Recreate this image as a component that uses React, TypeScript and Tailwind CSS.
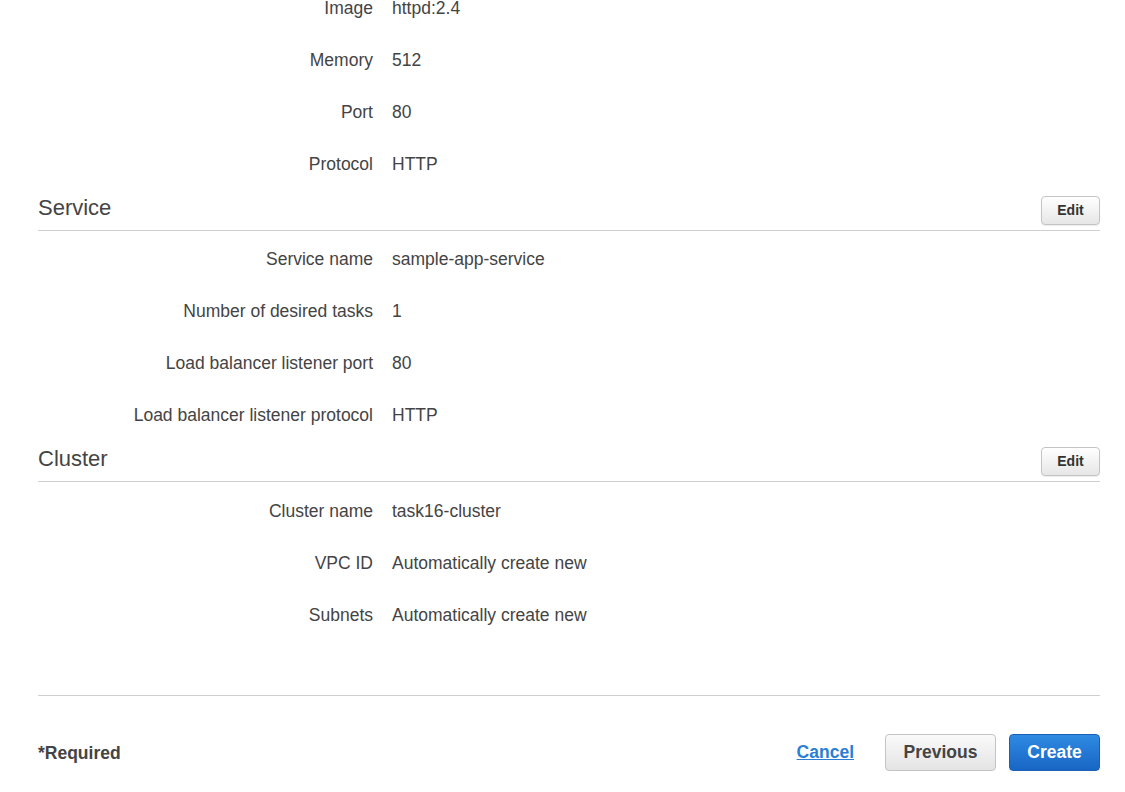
import React from "react";

type Row = [string, string];

const top: Row[] = [
  ["Image", "httpd:2.4"],
  ["Memory", "512"],
  ["Port", "80"],
  ["Protocol", "HTTP"],
];
const service: Row[] = [
  ["Service name", "sample-app-service"],
  ["Number of desired tasks", "1"],
  ["Load balancer listener port", "80"],
  ["Load balancer listener protocol", "HTTP"],
];
const cluster: Row[] = [
  ["Cluster name", "task16-cluster"],
  ["VPC ID", "Automatically create new"],
  ["Subnets", "Automatically create new"],
];

function Rows({ rows }: { rows: Row[] }) {
  return (
    <div className="flex flex-col">
      {rows.map(([k, v]) => (
        <div key={k} className="flex h-[52px] items-center">
          <div className="w-[335px] shrink-0 text-right">{k}</div>
          <div className="pl-[19px]">{v}</div>
        </div>
      ))}
    </div>
  );
}

function EditButton() {
  return (
    <button className="h-[29px] w-[59px] rounded-[4px] border border-[#c4c4c4] bg-gradient-to-b from-[#ffffff] to-[#e6e6e6] text-[14px] font-bold text-[#333] shadow-[0_1px_1px_rgba(0,0,0,0.08)]">
      Edit
    </button>
  );
}

function Header({ title }: { title: string }) {
  return (
    <div className="flex h-[41px] items-center justify-between border-b border-[#cfcfcf] pb-[1px]">
      <div className="mb-[4px] text-[22px] text-[#444]">{title}</div>
      <div className="mt-[2px]">
        <EditButton />
      </div>
    </div>
  );
}

export default function App() {
  return (
    <div
      className="min-h-[792px] w-[1125px] overflow-hidden bg-white text-[17.5px] text-[#444]"
      style={{ fontFamily: '"Liberation Sans", Arial, sans-serif' }}
    >
      <div className="mx-[38px] mt-[-18px] w-[1062px]">
        <Rows rows={top} />
        <Header title="Service" />
        <div className="mt-[2px]">
          <Rows rows={service} />
        </div>
        <Header title="Cluster" />
        <div className="mt-[3px]">
          <Rows rows={cluster} />
        </div>
        <div className="mt-[54px] border-t border-[#cfcfcf]" />
        <div className="flex h-[112px] items-center justify-between pt-[1px]">
          <div className="mt-[2px] text-[17.5px] font-bold text-[#444]">*Required</div>
          <div className="flex items-center">
            <a href="#" className="mr-[31px] text-[17.5px] font-bold text-[#2a7fd4] underline">
              Cancel
            </a>
            <button className="mr-[13px] h-[37px] w-[111px] rounded-[4px] border border-[#c4c4c4] bg-gradient-to-b from-[#fafafa] to-[#e4e4e4] text-[17.5px] font-bold text-[#444]">
              Previous
            </button>
            <button className="h-[37px] w-[91px] rounded-[4px] border border-[#1b5fb5] bg-gradient-to-b from-[#2f8ae2] to-[#1866c4] text-[17.5px] font-bold text-white">
              Create
            </button>
          </div>
        </div>
      </div>
    </div>
  );
}
